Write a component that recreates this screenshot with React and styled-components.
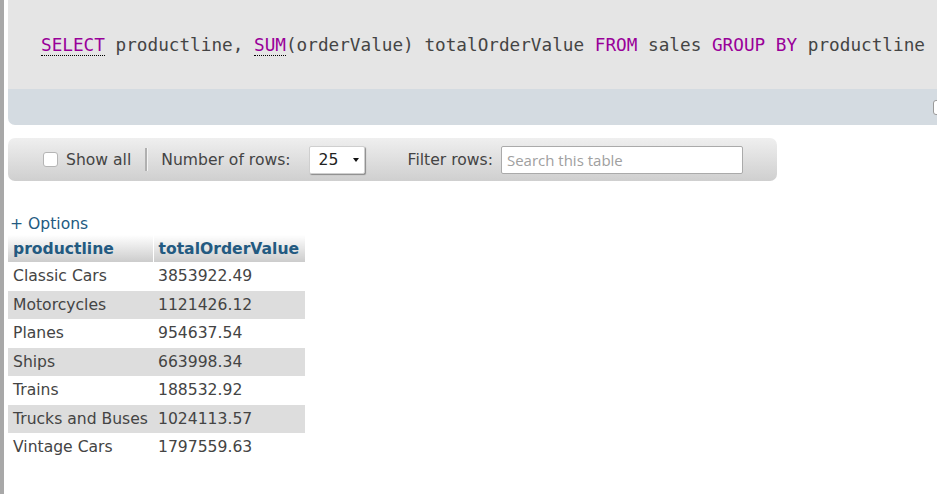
import styled, { createGlobalStyle } from "styled-components";

const GlobalStyle = createGlobalStyle`
  html, body {
    margin: 0;
    padding: 0;
    background: #ffffff;
    overflow: hidden;
  }
  body {
    font-family: "DejaVu Sans", "Liberation Sans", sans-serif;
    font-size: 15.6px;
    color: #444444;
  }
`;

const Page = styled.div`
  display: flex;
  min-height: 494px;
`;

const Resizer = styled.div`
  width: 4px;
  flex: none;
  background: #a8a8a8;
`;

const Main = styled.div`
  flex: 1;
  min-width: 0;
  padding-left: 4px;
`;

const SqlPanel = styled.div`
  width: 960px;
  border-bottom-left-radius: 7px;
  overflow: hidden;
`;

const SqlCode = styled.div`
  background: #e5e5e5;
  padding: 34px 0 33px 33px;
  font-family: "DejaVu Sans Mono", "Liberation Mono", monospace;
  font-size: 17.7px;
  line-height: 22px;
  color: #444444;
  white-space: nowrap;
`;

const Keyword = styled.span`
  color: #990099;
  border-bottom: ${props => (props.doc ? "1px dotted #000" : "none")};
`;

const SqlFooter = styled.div`
  height: 36px;
  background: #d4dbe1;
  display: flex;
  justify-content: flex-end;
  align-items: center;
  padding-right: 20px;
`;

const Box = styled.span`
  display: inline-block;
  width: 15px;
  height: 15px;
  box-sizing: border-box;
  background: #ffffff;
  border: 1px solid ${props => (props.dark ? "#9a9a9a" : "#b5b5b5")};
  border-radius: 3px;
  flex: none;
`;

const Toolbar = styled.div`
  width: 769px;
  height: 43px;
  margin-top: 13px;
  box-sizing: border-box;
  border-radius: 7px;
  background: linear-gradient(#efefef, #cfcfcf);
  display: flex;
  align-items: center;
  padding-left: 35px;
  white-space: nowrap;
`;

const Label = styled.span`
  margin-left: ${props => props.ml || 0}px;
  color: #444444;
`;

const Separator = styled.span`
  width: 2px;
  height: 23px;
  margin-left: 14px;
  background: #b0b0b0;
  box-shadow: 1px 0 0 #f4f4f4;
`;

const Select = styled.div`
  margin-left: 18px;
  width: 56px;
  height: 28px;
  box-sizing: border-box;
  background: #ffffff;
  border: 1px solid #cfcfcf;
  border-radius: 2px;
  box-shadow: 1px 1px 1px #8a8a8a;
  display: flex;
  align-items: center;
  justify-content: space-between;
  padding: 0 5px 0 9px;
  color: #222222;
`;

const Arrow = styled.span`
  width: 0;
  height: 0;
  border-left: 3px solid transparent;
  border-right: 3px solid transparent;
  border-top: 4px solid #111111;
`;

const SearchInput = styled.input`
  margin-left: 8px;
  width: 242px;
  height: 28px;
  box-sizing: border-box;
  border: 1px solid #aaaaaa;
  border-radius: 2px;
  padding: 0 5px;
  font-family: "Open Sans", "DejaVu Sans", sans-serif;
  font-size: 15px;
  color: #444444;
  &::placeholder {
    color: #a0a0a0;
  }
`;

const OptionsLink = styled.a`
  display: block;
  margin: 33px 0 0 2px;
  line-height: 20px;
  color: #235a81;
  text-decoration: none;
`;

const Table = styled.table`
  border-collapse: collapse;
  table-layout: fixed;
  width: 297px;
  margin-top: 1px;
`;

const HeadCell = styled.th`
  width: ${props => props.w}px;
  box-sizing: border-box;
  height: 27px;
  padding: 0 5px;
  text-align: left;
  font-weight: bold;
  color: #235a81;
  white-space: nowrap;
  background: linear-gradient(#ffffff, #cccccc);
  border-left: ${props => (props.first ? "none" : "1px solid #ffffff")};
`;

const Row = styled.tr`
  background: ${props => (props.odd ? "#dddddd" : "#ffffff")};
`;

const Cell = styled.td`
  padding: 0 5px;
  height: 28.5px;
  white-space: nowrap;
  overflow: hidden;
  color: #444444;
`;

const rows = [
  ["Classic Cars", "3853922.49"],
  ["Motorcycles", "1121426.12"],
  ["Planes", "954637.54"],
  ["Ships", "663998.34"],
  ["Trains", "188532.92"],
  ["Trucks and Buses", "1024113.57"],
  ["Vintage Cars", "1797559.63"],
];

export default function App() {
  return (
    <>
      <GlobalStyle />
      <Page>
        <Resizer />
        <Main>
          <SqlPanel>
            <SqlCode>
              <Keyword doc>SELECT</Keyword> productline,{" "}
              <Keyword doc>SUM</Keyword>(orderValue) totalOrderValue{" "}
              <Keyword>FROM</Keyword> sales <Keyword>GROUP BY</Keyword>{" "}
              productline
            </SqlCode>
            <SqlFooter>
              <Box dark />
            </SqlFooter>
          </SqlPanel>

          <Toolbar>
            <Box />
            <Label ml={8}>Show all</Label>
            <Separator />
            <Label ml={14}>Number of rows:</Label>
            <Select>
              <span>25</span>
              <Arrow />
            </Select>
            <Label ml={43}>Filter rows:</Label>
            <SearchInput placeholder="Search this table" />
          </Toolbar>

          <OptionsLink href="#">+ Options</OptionsLink>
          <Table>
            <thead>
              <tr>
                <HeadCell first w={145}>productline</HeadCell>
                <HeadCell w={152}>totalOrderValue</HeadCell>
              </tr>
            </thead>
            <tbody>
              {rows.map(([line, value], i) => (
                <Row key={line} odd={i % 2 === 1}>
                  <Cell>{line}</Cell>
                  <Cell>{value}</Cell>
                </Row>
              ))}
            </tbody>
          </Table>
        </Main>
      </Page>
    </>
  );
}
